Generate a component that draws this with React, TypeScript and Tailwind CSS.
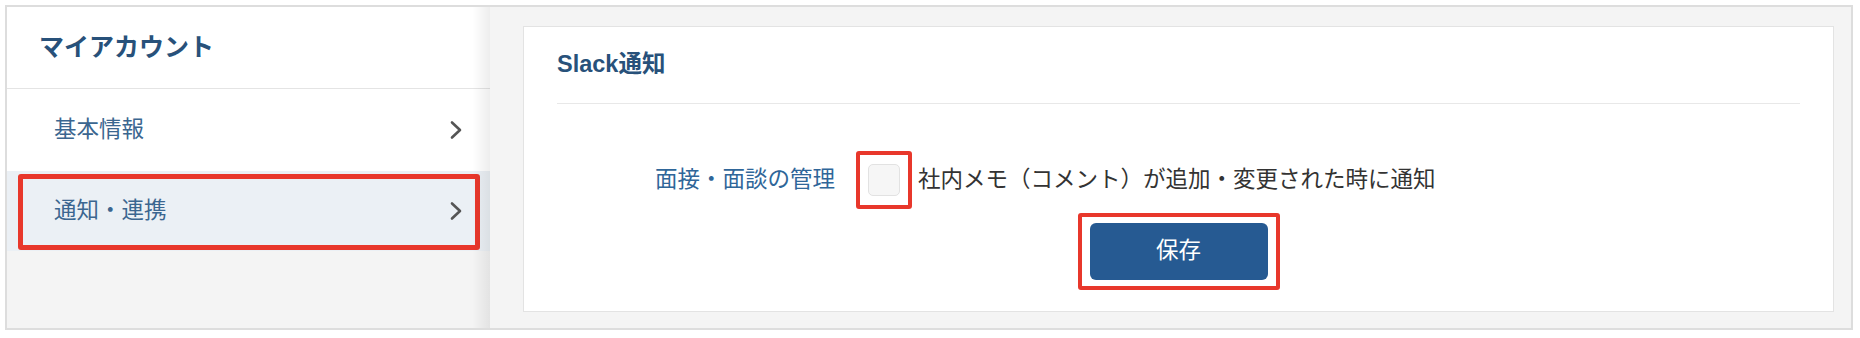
import React from "react";

const font = { fontFamily: '"Liberation Sans", "Noto Sans CJK JP", sans-serif' };

function Chevron() {
  return (
    <svg width="14" height="20" viewBox="0 0 14 20" fill="none" className="shrink-0">
      <polyline points="3,2.5 11,10 3,17.5" stroke="#555555" strokeWidth="2.6" strokeLinecap="round" strokeLinejoin="round" />
    </svg>
  );
}

function SideItem({ label, active = false }: { label: string; active?: boolean }) {
  return (
    <div
      className={[
        "relative flex items-center justify-between pl-[47px] pr-[27px]",
        active ? "h-[80px] bg-[#ebf0f5]" : "h-[82px] bg-white"
      ].join(" ")}
    >
      <span className="text-[22.5px] leading-none text-[#3b6690]">{label}</span>
      <Chevron />
      {active ? (
        <div className="pointer-events-none absolute left-[11px] right-[10px] top-[3px] bottom-[1px] rounded-[3px] border-[5px] border-[#e8372b]" />
      ) : null}
    </div>
  );
}

export default function App() {
  return (
    <div className="h-[338px] w-[1860px] bg-white pl-[5px] pt-[5px]" style={font}>
      <div className="flex h-[325px] w-[1848px] border-2 border-[#dddddd]">
        <aside className="relative flex w-[483px] shrink-0 flex-col bg-[#f4f4f4]">
          <div className="flex h-[82px] items-center border-b border-[#e4e4e4] bg-white pl-[32px]">
            <h1 className="text-[25px] font-bold leading-none text-[#28517a]">マイアカウント</h1>
          </div>
          <SideItem label="基本情報" />
          <SideItem label="通知・連携" active />
          <div className="pointer-events-none absolute bottom-0 right-0 top-0 w-[18px] bg-gradient-to-r from-transparent to-black/[0.07]" />
        </aside>

        <main className="flex flex-1 bg-[#f4f4f4] pb-[16px] pl-[33px] pr-[17px] pt-[19px]">
          <section className="flex flex-1 flex-col border border-[#e3e3e3] bg-white px-[33px]">
            <div className="flex h-[77px] items-center border-b border-[#e8e8e8]">
              <h2 className="text-[23.5px] font-bold leading-none text-[#28517a]">Slack通知</h2>
            </div>

            <div className="mt-[47px] flex h-[58px] items-center">
              <div className="w-[299px] pr-[21px] text-right text-[22.5px] leading-none text-[#2f6699]">
                面接・面談の管理
              </div>
              <label className="flex h-[58px] w-[56px] items-center justify-center rounded-[3px] border-[4.5px] border-[#e8372b]">
                <span className="block h-[32px] w-[32px] rounded-[5px] border border-[#e2e2e2] bg-[#f6f6f6]" />
              </label>
              <span className="ml-[6px] text-[22.5px] leading-none text-[#333333]">
                社内メモ（コメント）が追加・変更された時に通知
              </span>
            </div>

            <div className="mt-[4px] flex justify-center">
              <div className="rounded-[3px] border-[4.5px] border-[#e8372b] px-[8px] py-[6px]">
                <button className="flex h-[57px] w-[178px] items-center justify-center rounded-[6px] bg-[#265a92] text-[22.5px] leading-none text-white">
                  保存
                </button>
              </div>
            </div>
          </section>
        </main>
      </div>
    </div>
  );
}
